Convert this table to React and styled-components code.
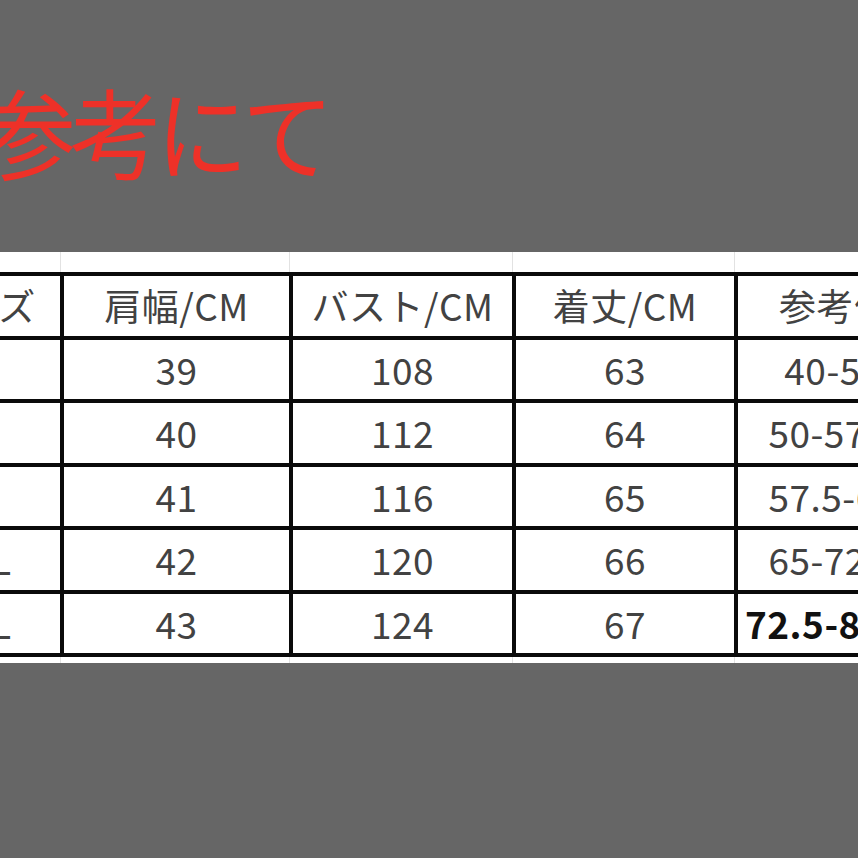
import styled, { createGlobalStyle } from 'styled-components'

const GlobalStyle = createGlobalStyle`
html, body {
  margin: 0;
  padding: 0;
  background: #666666;
}
`

const columns = [164, 229, 223, 222, 236]

const header = ['サイズ', '肩幅/CM', 'バスト/CM', '着丈/CM', '参考体重']

const rows = [
  ['S', '39', '108', '63', '40-50kg'],
  ['M', '40', '112', '64', '50-57.5kg'],
  ['L', '41', '116', '65', '57.5-65kg'],
  ['2XL', '42', '120', '66', '65-72.5kg'],
  ['3XL', '43', '124', '67', '72.5-82.5kg'],
]

function App() {
  return (
    <Page>
      <GlobalStyle />
      <Heading>
        <Title>参考にて</Title>
      </Heading>

      <Sheet>
        <Table>
          <colgroup>
            {columns.map((w, i) => <col key={i} style={{ width: w + 'px' }} />)}
          </colgroup>
          <thead>
            <Row>
              {header.map((h, i) => <Cell as="th" key={i}>{h}</Cell>)}
            </Row>
          </thead>
          <tbody>
            {rows.map((r, i) => (
              <Row key={i}>
                {r.map((v, j) => (
                  <Cell key={j} $strong={i === rows.length - 1 && j === r.length - 1}>{v}</Cell>
                ))}
              </Row>
            ))}
          </tbody>
        </Table>
      </Sheet>
    </Page>
  )
}

const Page = styled.div`
width: 858px;
height: 858px;
overflow: hidden;
background: #666666;
display: flex;
flex-direction: column;
`

const Heading = styled.div`
height: 252px;
flex-shrink: 0;
box-sizing: border-box;
padding-top: 81px;
`

const Title = styled.h1`
margin: 0 0 0 -16px;
font-family: "Noto Sans CJK JP", sans-serif;
font-weight: 400;
font-size: 92px;
line-height: 1;
letter-spacing: -6px;
color: #ee3128;
white-space: nowrap;
transform: scaleY(1.06);
transform-origin: left top;
`

const Sheet = styled.div`
height: 411px;
flex-shrink: 0;
box-sizing: border-box;
padding-top: 20px;
background-color: #ffffff;
background-image:
  linear-gradient(#e2e2e2, #e2e2e2),
  linear-gradient(#e2e2e2, #e2e2e2),
  linear-gradient(#e2e2e2, #e2e2e2),
  linear-gradient(#e2e2e2, #e2e2e2);
background-size: 1px 100%;
background-repeat: no-repeat;
background-position: 60px 0, 289px 0, 512px 0, 734px 0;
overflow: hidden;
`

const Table = styled.table`
border-collapse: collapse;
table-layout: fixed;
margin-left: -104px;
width: ${columns.reduce((a, b) => a + b, 0)}px;
background: #ffffff;
font-family: "Noto Sans CJK JP", sans-serif;
`

const Row = styled.tr`
height: 63.5px;
`

const Cell = styled.td`
border: 4px solid #0a0a0a;
padding: 0;
text-align: center;
vertical-align: middle;
white-space: nowrap;
overflow: hidden;
font-size: 37px;
line-height: 1;
letter-spacing: 0.5px;
font-weight: ${p => (p.$strong ? 700 : 400)};
color: ${p => (p.$strong ? '#111111' : '#424242')};
`

export default App
